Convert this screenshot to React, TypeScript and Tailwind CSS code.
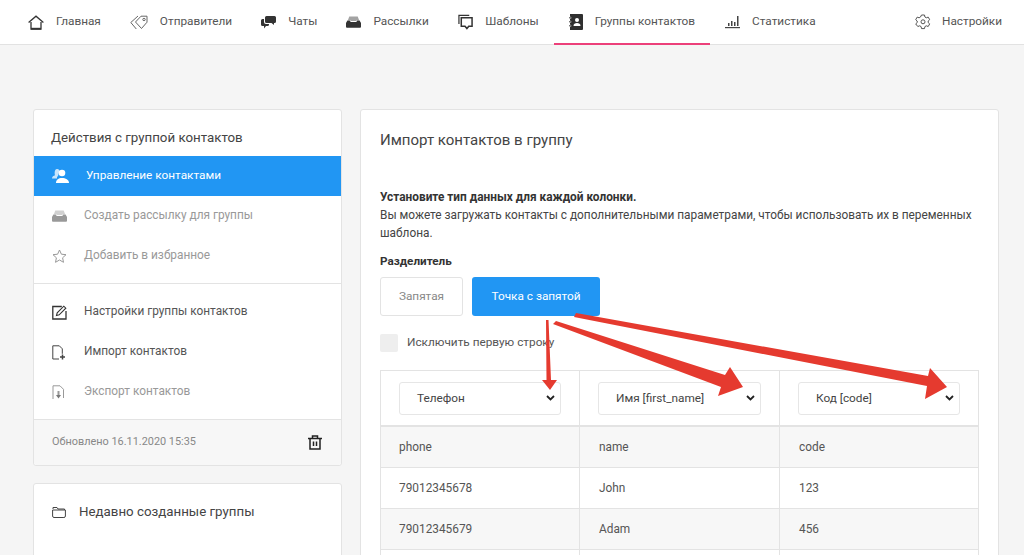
import type { ReactNode } from 'react';

const ico = 'shrink-0';

const HomeIcon = () => (
    <svg className={ico} width="16" height="15" viewBox="0 0 16 15" fill="none" stroke="#333" strokeWidth="1.3">
        <path d="M.6 7.500 8 1.200l7.400 6.300" />
        <path d="M3 7v7h10V7" />
        <path d="M3 13.700h10" strokeWidth="1.800" />
    </svg>
);
const TagIcon = () => (
    <svg className={ico} width="18" height="15" viewBox="0 0 18 15" fill="none" stroke="#666" strokeWidth="1">
        <path d="M5.500 7 11 1.200h6v6L11.500 13.500z" />
        <path d="M8 1 .8 7.500l5.500 6.500" />
        <circle cx="14" cy="4.500" r="1.200" />
    </svg>
);
const ChatIcon = () => (
    <svg className={ico} width="15" height="13" viewBox="0 0 15 13" fill="#333">
        <path d="M5.500 0h8A1.500 1.500 0 0 1 15 1.500v4A1.500 1.500 0 0 1 13.500 7H13v2l-2.500-2h-5A1.500 1.500 0 0 1 4 5.500v-4A1.500 1.500 0 0 1 5.500 0z" />
        <path d="M1.500 3H3v3a2 2 0 0 0 2 2h3v.500A1.500 1.500 0 0 1 6.500 10H5l-2 2.500V10H1.500A1.500 1.500 0 0 1 0 8.500v-4A1.500 1.500 0 0 1 1.500 3z" />
    </svg>
);
const InboxIcon = ({ color = '#333' }: { color?: string }) => (
    <svg className={ico} width="15" height="12" viewBox="0 0 16 12" fill={color}>
        <path d="M3.500 0h9l1.500 4H11.500l-.5 1H5l-.5-1H2z" fillOpacity="0.45" />
        <path d="M1.500 4.500H4l1 1.500h6l1-1.500h2.500L16 7v4a1 1 0 0 1-1 1H1a1 1 0 0 1-1-1V7z" />
    </svg>
);
const TemplateIcon = () => (
    <svg className={ico} width="15" height="16" viewBox="0 0 16 16" fill="none" stroke="#333" strokeWidth="1.300">
        <path d="M1 10V1h11" />
        <path d="M3.500 3.500H15v9h-3.500L9.500 15l-2-2.500h-4z" strokeWidth="1.600" />
    </svg>
);
const BookIcon = () => (
    <svg className={ico} width="14" height="16" viewBox="0 0 14 16">
        <path d="M1 0h12a1 1 0 0 1 1 1v14a1 1 0 0 1-1 1H1z" fill="#2f2f2f" />
        <path d="M0 3h2v1.500H0zM0 7h2v1.500H0zM0 11h2v1.500H0z" fill="#2f2f2f" stroke="#fff" strokeWidth="0.400" />
        <circle cx="8" cy="6" r="2" fill="#fff" />
        <path d="M4.500 12c0-2.200 1.500-3 3.500-3s3.500.8 3.500 3z" fill="#fff" />
    </svg>
);
const StatsIcon = () => (
    <svg className={ico} width="15" height="14" viewBox="0 0 15 14" fill="#444">
        <path d="M3 8h1.500v3H3zM6 6h1.500v5H6zM9 7h1.500v4H9zM12 1h1.500v10H12z" />
        <path d="M0 12h15v1.200H0z" />
    </svg>
);
const GearIcon = () => (
    <svg className={ico} width="16" height="16" viewBox="0 0 16 16" fill="none" stroke="#555" strokeWidth="1">
        <path d="M6.500 1h3l.4 2 1.400.8 1.900-.7 1.500 2.600-1.500 1.300v1.600l1.500 1.300-1.500 2.600-1.900-.7-1.400.8-.4 2h-3l-.4-2-1.400-.8-1.900.7L.7 9.900l1.500-1.300V7L.7 5.700l1.500-2.600 1.900.7 1.400-.8z" />
        <circle cx="8" cy="7.800" r="2" />
    </svg>
);
const UsersIcon = () => (
    <svg className={ico} width="17" height="14" viewBox="0 0 17 14" fill="#fff">
        <path d="M5 0a2.500 2.500 0 0 1 2.500 1.500L6 7 5 8v1.500H0c0-2 1.500-2.500 3-3.200C2.300 4.500 2.500 0 5 0z" fillOpacity="0.75" />
        <circle cx="10" cy="4" r="3.300" />
        <path d="M4 14c0-3.500 2.500-5 6-5s7 1.500 7 5z" />
    </svg>
);
const StarIcon = () => (
    <svg className={ico} width="15" height="14" viewBox="0 0 15 14" fill="none" stroke="#999" strokeWidth="1">
        <path d="m7.500 1 1.900 4.200 4.600.5-3.400 3.100.9 4.500-4-2.300-4 2.300.9-4.500L1 5.700l4.600-.5z" />
    </svg>
);
const EditIcon = () => (
    <svg className={ico} width="15" height="15" viewBox="0 0 15 15" fill="none" stroke="#333" strokeWidth="1.300">
        <path d="M14 6v8H.8V1.500h9" />
        <path d="M4.500 10.500 5.200 7.800 11.800 1.200l2 2L7.200 9.800z" fill="#fff" strokeWidth="1.100" />
    </svg>
);
const ImportIcon = () => (
    <svg className={ico} width="14" height="15" viewBox="0 0 14 15" fill="none" stroke="#444" strokeWidth="1">
        <path d="M7 14H.8V.8h6.500l3 3v5" />
        <path d="M8 12h5M10.500 9.500v5" strokeWidth="1.500" />
    </svg>
);
const ExportIcon = () => (
    <svg className={ico} width="13" height="15" viewBox="0 0 13 15" fill="none" stroke="#999" strokeWidth="1">
        <path d="M1 14V.8h7l3.500 3.500V13" />
        <path d="M6.500 6v5" strokeWidth="2" />
        <path d="M4 10h5l-2.500 3.500z" fill="#777" stroke="none" />
    </svg>
);
const TrashIcon = () => (
    <svg className={ico} width="14" height="15" viewBox="0 0 14 15" fill="none" stroke="#222" strokeWidth="1.500">
        <path d="M0 3.500h14" />
        <path d="M4.500 3.500V1h5v2.500" />
        <path d="M2 3.500V14h10V3.500" />
        <path d="M5.500 6.500v4.500M8.500 6.500v4.500" />
    </svg>
);
const FolderIcon = () => (
    <svg className={ico} width="14" height="12" viewBox="0 0 14 12" fill="none" stroke="#444" strokeWidth="1">
        <path d="M1 3V1.500h4l1 1.500h6.500V4" />
        <path d="M.6 4h12.800v6a1.500 1.500 0 0 1-1.500 1.500H2A1.500 1.500 0 0 1 .6 10z" />
    </svg>
);

const navItems: { label: string; icon: ReactNode; active?: boolean }[] = [
    { label: 'Главная', icon: <HomeIcon /> },
    { label: 'Отправители', icon: <TagIcon /> },
    { label: 'Чаты', icon: <ChatIcon /> },
    { label: 'Рассылки', icon: <InboxIcon /> },
    { label: 'Шаблоны', icon: <TemplateIcon /> },
    { label: 'Группы контактов', icon: <BookIcon />, active: true },
    { label: 'Статистика', icon: <StatsIcon /> },
];

function SideItem({ icon, label, muted }: { icon: ReactNode; label: string; muted?: boolean }) {
    return (
        <div className={`flex h-10 items-center pl-[18px] text-[11.85px] ${muted ? 'text-[#999]' : 'text-[#555]'}`}>
            <span className="flex w-[32px] items-center">{icon}</span>
            {label}
        </div>
    );
}

function ColumnSelect({ label }: { label: string }) {
    return (
        <div className="flex h-[33px] items-center justify-between rounded-[3px] border border-[#e6e6e6] bg-white pl-[17px] pr-[5px] text-[11.8px] text-[#444]">
            <span className="pt-[1px]">{label}</span>
            <svg width="9" height="6" viewBox="0 0 9 6" fill="none" stroke="#222" strokeWidth="1.800">
                <path d="m1 1 3.500 3.500L8 1" />
            </svg>
        </div>
    );
}

const rows = [
    ['phone', 'name', 'code'],
    ['79012345678', 'John', '123'],
    ['79012345679', 'Adam', '456'],
    ['', '', ''],
];

export default function App() {
    return (
        <div className="relative h-[555px] w-[1024px] overflow-hidden bg-[#f5f5f5] font-['Roboto',sans-serif]">
            {/* Top nav */}
            <div className="flex h-[45px] items-stretch justify-between border-b border-[#e2e2e2] bg-white pl-[13.5px] pr-[22px] text-[11.8px] text-[#555]">
                <div className="flex">
                    {navItems.map((item, i) => (
                        <div
                            key={item.label}
                            className={`-mb-px flex items-center gap-3 border-b-2 pt-[1px] ${i < 4 ? 'px-[14.5px]' : 'px-[15px]'} ${item.active ? 'border-[#ec407a]' : 'border-transparent'}`}
                        >
                            {item.icon}
                            {item.label}
                        </div>
                    ))}
                </div>
                <div className="flex items-center gap-[11px]">
                    <GearIcon />
                    Настройки
                </div>
            </div>

            <div className="flex gap-[18px] pl-[33px] pt-[64px]">
                {/* Left column */}
                <div className="flex w-[309px] flex-col gap-[17px]">
                    <div className="rounded-[3px] border border-[#e3e3e3] bg-white">
                        <div className="flex h-[46px] items-center pl-[17px] pt-[10px] text-[13.3px] text-[#444]">
                            Действия с группой контактов
                        </div>
                        <div className="flex h-10 items-center bg-[#2196f3] pl-[18px] text-[11.8px] text-white">
                            <span className="flex w-[34px] items-center"><UsersIcon /></span>
                            Управление контактами
                        </div>
                        <SideItem icon={<InboxIcon color="#999" />} label="Создать рассылку для группы" muted />
                        <SideItem icon={<StarIcon />} label="Добавить в избранное" muted />
                        <div className="mt-[7px] border-t border-[#e3e3e3] pt-2">
                            <SideItem icon={<EditIcon />} label="Настройки группы контактов" />
                            <SideItem icon={<ImportIcon />} label="Импорт контактов" />
                            <SideItem icon={<ExportIcon />} label="Экспорт контактов" muted />
                        </div>
                        <div className="mt-[7px] flex h-[46px] items-center justify-between rounded-b-[3px] border-t border-[#e3e3e3] bg-[#f7f7f7] pl-[18px] pr-[19px] text-[10.9px] text-[#888]">
                            Обновлено 16.11.2020 15:35
                            <TrashIcon />
                        </div>
                    </div>
                    <div className="h-[120px] rounded-[3px] border border-[#e3e3e3] bg-white pl-[18px] pt-[18px]">
                        <div className="flex items-center gap-[13px] text-[13.3px] text-[#444]">
                            <FolderIcon />
                            Недавно созданные группы
                        </div>
                    </div>
                </div>

                {/* Right card */}
                <div className="h-[600px] w-[639px] rounded-[3px] border border-[#e3e3e3] bg-white px-[19px]">
                    <h2 className="pt-[20px] text-[15px] leading-5 text-[#444]">Импорт контактов в группу</h2>
                    <p className="mt-[39px] text-[11.85px] font-bold leading-[17px] text-[#333]">
                        Установите тип данных для каждой колонки.
                    </p>
                    <p className="text-[11.85px] leading-[18px] text-[#444]">
                        Вы можете загружать контакты с дополнительными параметрами, чтобы использовать их в переменных шаблона.
                    </p>
                    <p className="mt-[10px] text-[11.7px] font-bold leading-[18px] text-[#333]">Разделитель</p>
                    <div className="mt-[7px] flex gap-[9px] text-[11.8px]">
                        <div className="flex h-[39px] w-[83px] items-center justify-center rounded-[3px] border border-[#e3e3e3] text-[#888]">
                            Запятая
                        </div>
                        <div className="flex h-[39px] w-[128px] items-center justify-center rounded-[3px] bg-[#2196f3] text-white">
                            Точка с запятой
                        </div>
                    </div>
                    <div className="mt-[17px] flex h-[19px] items-center gap-[9px] text-[11.8px] text-[#555]">
                        <span className="h-[18px] w-[18px] rounded-[2px] bg-[#eeeeee]" />
                        Исключить первую строку
                    </div>
                    {/* Column table */}
                    <div className="mt-[18px] w-[599px] border-l border-r border-t border-[#e3e3e3]">
                        <div className="grid h-[56px] grid-cols-[199px_200px_198px] items-center border-b-2 border-[#e3e3e3]">
                            <div className="flex h-full items-center border-r border-[#e3e3e3] px-[18px]"><div className="w-full"><ColumnSelect label="Телефон" /></div></div>
                            <div className="flex h-full items-center border-r border-[#e3e3e3] px-[18px]"><div className="w-full"><ColumnSelect label="Имя [first_name]" /></div></div>
                            <div className="flex h-full items-center px-[18px]"><div className="w-full"><ColumnSelect label="Код [code]" /></div></div>
                        </div>
                        {rows.map((row, i) => (
                            <div
                                key={i}
                                className={`grid h-[41px] grid-cols-[199px_200px_198px] border-b border-[#e3e3e3] text-[11.85px] text-[#555] ${i === 0 || i === 2 ? 'bg-[#f7f7f7]' : 'bg-white'}`}
                            >
                                {row.map((cell, j) => (
                                    <div key={j} className={`flex items-center pt-[1px] ${j === 0 ? 'pl-[18px]' : 'pl-[19px]'} ${j < 2 ? 'border-r border-[#e3e3e3]' : ''}`}>
                                        {cell}
                                    </div>
                                ))}
                            </div>
                        ))}
                    </div>
                </div>
            </div>

            {/* Red annotation arrows */}
            <svg className="pointer-events-none absolute left-0 top-0" width="1024" height="555" viewBox="0 0 1024 555" fill="#e53a2f">
                <path d="M546 320 L548.500 320 L551 380 L557 380 L550 390 L542 380 L546.500 380 Z" />
                <path d="M553 324 L556 321 L725 375 L730 367 L743 387 L718 396 L721 387 Z" />
                <path d="M574 317 L576 313 L928 376 L930 368 L947 387 L925 399 L927 386 Z" />
            </svg>
        </div>
    );
}
